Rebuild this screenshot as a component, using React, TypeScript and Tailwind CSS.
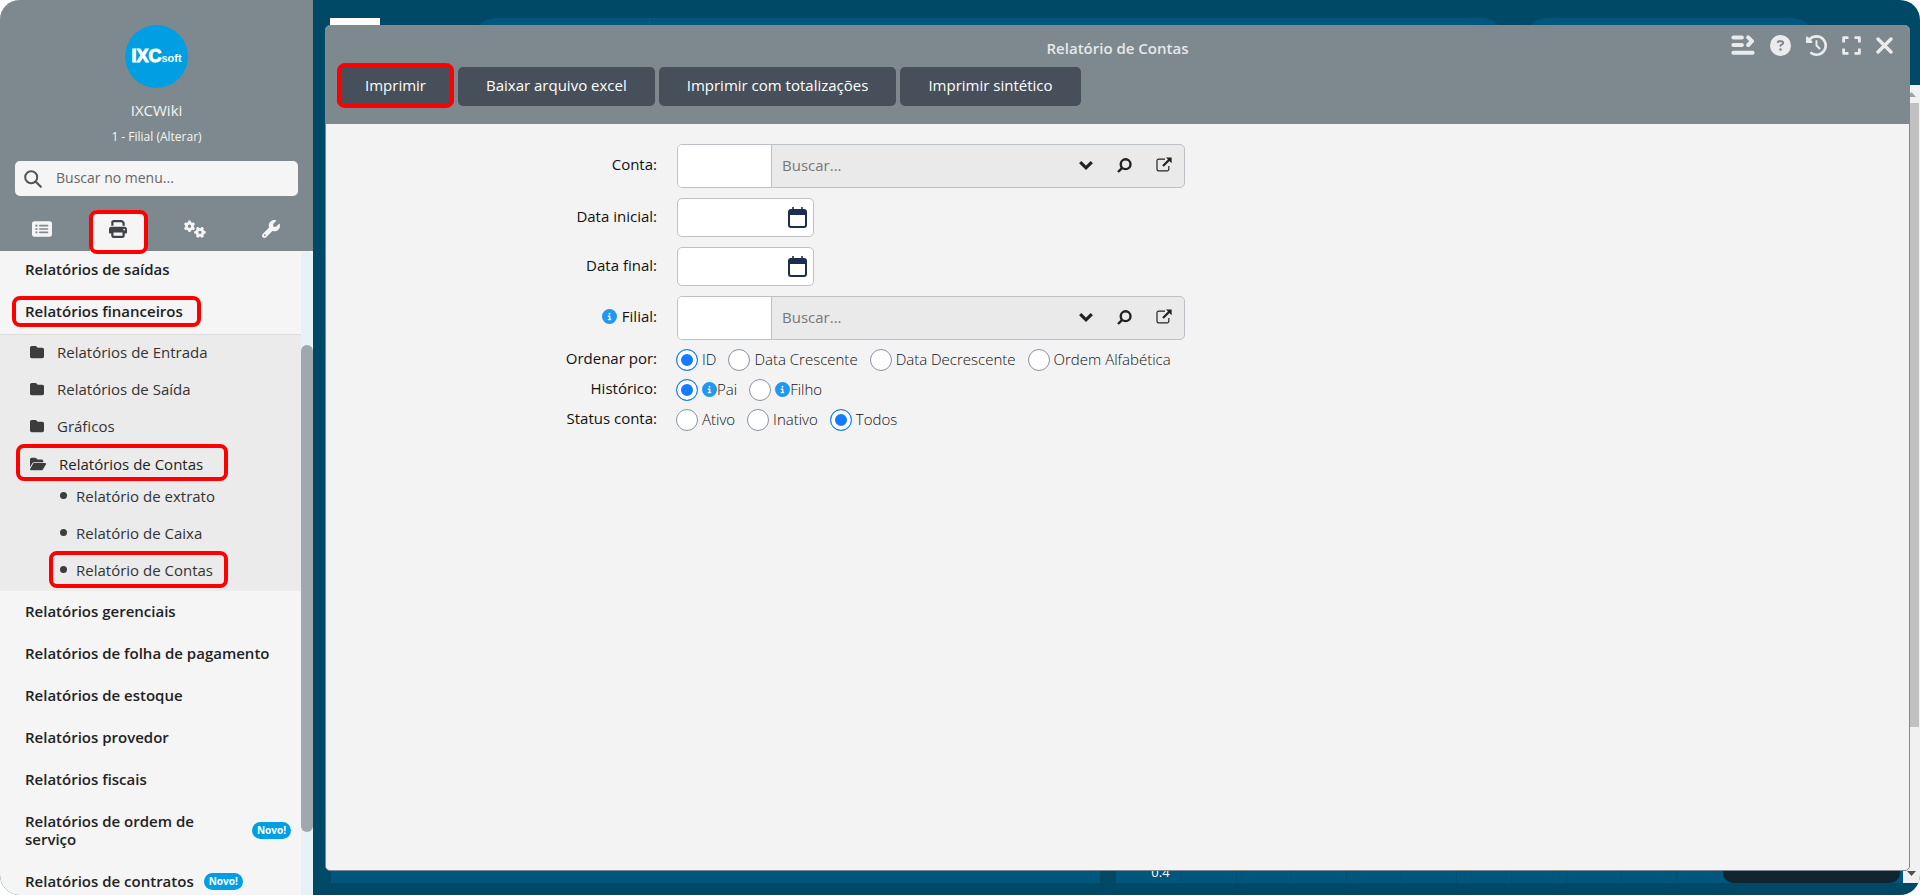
import { useState, type ReactNode } from "react";
import {
  FaCircleInfo,
  FaCircleQuestion,
  FaClockRotateLeft,
  FaFolder,
  FaFolderOpen,
  FaGears,
  FaPrint,
  FaRectangleList,
  FaWrench,
} from "react-icons/fa6";

const TABS = [
  { id: "cadastros", icon: FaRectangleList, size: "size-5" },
  { id: "relatorios", icon: FaPrint, size: "size-[18px]" },
  { id: "sistema", icon: FaGears, size: "size-[22px]" },
  { id: "ferramentas", icon: FaWrench, size: "size-[18px]" },
];

const MENU_AFTER = [
  "Relatórios gerenciais",
  "Relatórios de folha de pagamento",
  "Relatórios de estoque",
  "Relatórios provedor",
  "Relatórios fiscais",
];

const ACTIONS = [
  "Imprimir",
  "Baixar arquivo excel",
  "Imprimir com totalizações",
  "Imprimir sintético",
];

const GRID_LINES = [0, 1, 2, 3, 4, 5, 6, 7, 8, 9];

const Highlight = ({ className }: { className: string }) => (
  <span
    className={`pointer-events-none absolute rounded-lg border-4 border-[#fe0000] ${className}`}
  />
);

const NewBadge = () => (
  <span className="rounded-full bg-[#009fe3] px-[5px] text-[10px] leading-[17px] font-bold text-white">
    Novo!
  </span>
);

const SearchIcon = ({ className }: { className: string }) => (
  <svg
    viewBox="0 0 18 18"
    className={className}
    fill="none"
    stroke="currentColor"
    strokeLinecap="round"
  >
    <circle cx="7.2" cy="7.2" r="6" strokeWidth="2" />
    <path d="M11.8 11.8 16.8 16.8" strokeWidth="2.2" />
  </svg>
);

const Sidebar = () => {
  const [tab, setTab] = useState("relatorios");

  return (
    <aside className="flex w-[313px] shrink-0 flex-col bg-[#f5f5f5]">
      <div className="flex flex-col bg-[#7d898e] pt-[25px]">
        <div className="mx-auto flex size-[63px] items-baseline justify-center rounded-full bg-[#009fe3] pt-[19px] font-['Liberation_Sans',sans-serif] font-bold text-white">
          <span className="text-lg leading-6 [-webkit-text-stroke:1px_white]">
            IXC
          </span>
          <span className="text-[11px] leading-6">soft</span>
        </div>
        <p className="mt-3 text-center text-[15px] leading-5 text-[#f5f5f5]">
          IXCWiki
        </p>
        <a
          href="#filial"
          className="mt-[7px] text-center text-xs leading-5 text-[#f5f5f5]"
        >
          1 - Filial (Alterar)
        </a>
        <label className="mx-[15px] mt-3.5 flex h-[35px] items-center rounded-[5px] bg-[#f5f5f5] pl-[9px]">
          <SearchIcon className="size-[18px] text-[#555]" />
          <input
            type="text"
            aria-label="Buscar no menu"
            placeholder="Buscar no menu..."
            className="ml-3.5 min-w-0 flex-1 bg-transparent pb-0.5 text-sm outline-none placeholder:text-[#666]"
          />
        </label>
        <nav className="mt-3.5 flex px-1">
          {TABS.map(({ id, icon: Icon, size }) => (
            <button
              key={id}
              aria-label={id}
              onClick={() => setTab(id)}
              className="relative flex h-[41px] flex-1 justify-center"
            >
              <span
                className={
                  tab === id
                    ? "flex h-full w-14 items-center justify-center rounded-t-lg bg-[#f5f5f5] pb-1 text-[#3f4247]"
                    : "flex h-full items-center pb-1 text-[#f5f5f5]"
                }
              >
                <Icon className={size} />
              </span>
              {id === "relatorios" && (
                <Highlight className="inset-x-[9px] top-0 -bottom-[3px]" />
              )}
            </button>
          ))}
        </nav>
      </div>

      <div className="flex min-h-0 flex-1">
        <ul className="flex-1 overflow-hidden text-[15px] leading-[18px] font-semibold text-[#222]">
          <li className="flex h-9 items-center pl-[25px]">
            <a href="#saidas">Relatórios de saídas</a>
          </li>
          <li>
            <div className="relative flex h-[47px] items-center pl-[25px]">
              <a href="#financeiros">Relatórios financeiros</a>
              <Highlight className="top-[9px] left-3 h-[31px] w-[189px]" />
            </div>
            <ul className="border-t border-[#dcdcdc] bg-[#ebebeb] pb-[7px] font-normal text-[#333]">
              {["Relatórios de Entrada", "Relatórios de Saída", "Gráficos"].map(
                (name) => (
                  <li
                    key={name}
                    className="flex h-[37px] items-center pb-1 pl-[30px]"
                  >
                    <FaFolder className="size-3.5 text-[#3c3c3c]" />
                    <a href="#pasta" className="ml-[13px]">
                      {name}
                    </a>
                  </li>
                ),
              )}
              <li>
                <div className="relative flex h-[37px] items-center pb-0.5 pl-[30px] font-medium text-[#222]">
                  <FaFolderOpen className="size-4 text-[#3c3c3c]" />
                  <a href="#contas" className="ml-[13px]">
                    Relatórios de Contas
                  </a>
                  <Highlight className="-top-0.5 left-4 h-[37px] w-[212px]" />
                </div>
                <ul className="flex flex-col gap-2.5">
                  {[
                    "Relatório de extrato",
                    "Relatório de Caixa",
                    "Relatório de Contas",
                  ].map((name) => (
                    <li
                      key={name}
                      className="relative flex h-[27px] items-center pb-0.5 pl-[60px]"
                    >
                      <span className="size-[7px] rounded-full bg-[#3c3c3c]" />
                      <a href="#relatorio" className="ml-[9px]">
                        {name}
                      </a>
                      {name === "Relatório de Contas" && (
                        <Highlight className="-top-1.5 left-[49px] h-[37px] w-[179px]" />
                      )}
                    </li>
                  ))}
                </ul>
              </li>
            </ul>
          </li>
          {MENU_AFTER.map((name) => (
            <li key={name} className="flex h-[42px] items-center pb-0.5 pl-[25px]">
              <a href="#grupo">{name}</a>
            </li>
          ))}
          <li className="flex h-[60px] items-center justify-between pr-2.5 pb-0.5 pl-[25px]">
            <a href="#ordem" className="w-[200px]">
              Relatórios de ordem de serviço
            </a>
            <NewBadge />
          </li>
          <li className="flex h-[42px] items-center gap-2.5 pb-0.5 pl-[25px]">
            <a href="#contratos">Relatórios de contratos</a>
            <NewBadge />
          </li>
        </ul>
        <div className="w-3 rounded-t-full bg-[#e8f1f6] pt-[94px]">
          <div className="h-[487px] rounded-full bg-[#a0a7ad]" />
        </div>
      </div>
    </aside>
  );
};

// Dashboard that stays behind the open window
const Backdrop = () => (
  <div className="absolute inset-0 flex flex-col justify-between">
    <div className="flex h-[85px] pt-[18px] pl-[17px]">
      <div className="h-10 w-[50px] bg-white" />
      <div className="ml-[92px] flex h-12 flex-1 rounded-[25px] bg-[#00577e]">
        <div className="w-[178px] border-r border-[#006289]" />
      </div>
      <div className="mr-[104px] ml-[18px] h-12 w-[293px] rounded-[25px] bg-[#00577e]" />
    </div>
    <div className="flex min-h-0 flex-1 justify-end">
      <div className="flex w-[17px] flex-col items-center bg-[#f1f1f1]">
        <svg viewBox="0 0 17 18" className="h-[18px] w-full" fill="#a3a3a3">
          <path d="M8.5 7 13 12H4z" />
        </svg>
        <div className="mr-px h-[624px] w-4 self-end bg-[#c1c1c1]" />
        <svg viewBox="0 0 17 18" className="mt-auto h-[18px] w-full" fill="#505050">
          <path d="M8.5 11 13 6H4z" />
        </svg>
      </div>
    </div>
    <div className="h-3" />
    <div className="absolute right-[17px] bottom-3 left-[18px] flex h-10 gap-4">
      <div className="w-[769px] bg-[#00577e]" />
      <div className="relative flex flex-1 overflow-hidden bg-[#00577e]">
        <div className="flex w-[66px] items-end justify-center border-r border-[#004f73] pb-[3px] pl-6 text-[13px] leading-4 text-white">
          0.4
        </div>
        {GRID_LINES.map((n) => (
          <div key={n} className="w-[55px] border-r border-[#004f73]" />
        ))}
        <div className="absolute right-[3px] bottom-0 h-10 w-[177px] rounded-[10px] bg-[#10252f]" />
      </div>
    </div>
  </div>
);

const WindowControls = () => (
  <div className="absolute top-[7px] right-4 flex h-6 items-center gap-[15px] text-[#ebebeb]">
    <button aria-label="Menu">
      <svg viewBox="0 0 24 20" className="h-5 w-6" fill="none" stroke="currentColor" strokeWidth="4" strokeLinecap="round" strokeLinejoin="round">
        <path d="M2.4 2.4h8.5M2.4 10h8.5M2.4 17.8h19.2" />
        <path d="M17.2 2.4 21 6.2 17.2 10" />
      </svg>
    </button>
    <button aria-label="Ajuda">
      <FaCircleQuestion className="size-[21px]" />
    </button>
    <button aria-label="Histórico">
      <FaClockRotateLeft className="size-[21px]" />
    </button>
    <button aria-label="Tela cheia">
      <svg viewBox="0 0 19 19" className="size-[19px]" fill="none" stroke="currentColor" strokeWidth="2.8" strokeLinejoin="round">
        <path d="M6.5 1.6H1.6V6.5M12.5 1.6h4.9V6.5M17.4 12.5v4.9h-4.9M6.5 17.4H1.6V12.5" />
      </svg>
    </button>
    <button aria-label="Fechar">
      <svg viewBox="0 0 17 17" className="size-[17px]" fill="none" stroke="currentColor" strokeWidth="3.4" strokeLinecap="round">
        <path d="M2 2 15 15M15 2 2 15" />
      </svg>
    </button>
  </div>
);

const Row = ({
  label,
  htmlFor,
  info,
  children,
}: {
  label: string;
  htmlFor?: string;
  info?: boolean;
  children: ReactNode;
}) => (
  <div className="flex items-center gap-5">
    <label
      htmlFor={htmlFor}
      className="flex w-[331px] items-center justify-end gap-[5px] pb-1 text-[15px] leading-5 text-[#111]"
    >
      {info && <FaCircleInfo className="size-[15px] text-[#2196f3]" />}
      {label}
    </label>
    {children}
  </div>
);

const LookupField = ({ id }: { id: string }) => (
  <div className="flex h-11 w-[508px] overflow-hidden rounded-[5px] border border-[#bcc1c6] bg-[#eaeaea]">
    <input
      id={id}
      type="text"
      className="w-[94px] border-r border-[#bcc1c6] bg-white px-2.5 text-[15px] outline-none"
    />
    <input
      type="text"
      aria-label="Buscar"
      placeholder="Buscar..."
      className="min-w-0 flex-1 px-2.5 pb-0.5 text-[15px] outline-none placeholder:text-[#777]"
    />
    <div className="flex items-center gap-6 pr-3 pb-0.5 text-[#222]">
      <button type="button" aria-label="Abrir lista">
        <svg viewBox="0 0 14 14" className="size-3.5" fill="none" stroke="currentColor" strokeWidth="3.2">
          <path d="M1.2 4.2 7 9.8 12.8 4.2" />
        </svg>
      </button>
      <button type="button" aria-label="Pesquisar">
        <svg viewBox="0 0 15 15" className="size-[15px]" fill="none" stroke="currentColor" strokeWidth="2.4">
          <circle cx="8.6" cy="6.2" r="4.9" />
          <path d="M5.2 9.8 1 14" />
        </svg>
      </button>
      <button type="button" aria-label="Abrir cadastro">
        <svg viewBox="0 0 16 16" className="size-4" fill="none" stroke="currentColor">
          <path d="M9 2.2H2.6A1.6 1.6 0 0 0 1 3.8v8.4a1.6 1.6 0 0 0 1.6 1.6h8.6a1.6 1.6 0 0 0 1.6-1.6V9" strokeWidth="1.2" />
          <path d="M7 9 13.2 2.8" strokeWidth="2.2" />
          <path d="M10 .6h5.6v5.6z" fill="currentColor" stroke="none" />
        </svg>
      </button>
    </div>
  </div>
);

const DateField = ({ id }: { id: string }) => (
  <div className="flex h-[39px] w-[137px] items-center rounded-[5px] border border-[#bcc1c6] bg-white pr-1.5 pb-0.5">
    <input
      id={id}
      type="text"
      className="h-full min-w-0 flex-1 px-2.5 text-[15px] outline-none"
    />
    <button type="button" aria-label="Abrir calendário">
      <svg viewBox="0 0 19 22" className="h-[22px] w-[19px] text-[#1d2d50]">
        <path
          fill="currentColor"
          fillRule="evenodd"
          d="M4.2 1h1.6v2h7.4V1h1.6v2H16a3 3 0 0 1 3 3v13a3 3 0 0 1-3 3H3a3 3 0 0 1-3-3V6a3 3 0 0 1 3-3h1.2zM2 9v10a1 1 0 0 0 1 1h13a1 1 0 0 0 1-1V9z"
        />
      </svg>
    </button>
  </div>
);

const RadioGroup = ({
  name,
  options,
  initial,
  info,
}: {
  name: string;
  options: string[];
  initial: string;
  info?: boolean;
}) => (
  <div className="-ml-px flex gap-3">
    {options.map((option) => (
      <label
        key={option}
        className="flex items-center text-[15px] leading-5 font-light text-[#111]"
      >
        <input
          type="radio"
          name={name}
          defaultChecked={option === initial}
          className="mr-1 size-[22px] appearance-none rounded-full border border-[#8a92a3] bg-white checked:border-[#147aff] checked:bg-[#147aff] checked:shadow-[inset_0_0_0_4px_white]"
        />
        <span className="flex items-center pb-0.5">
          {info && <FaCircleInfo className="size-[15px] text-[#2196f3]" />}
          {option}
        </span>
      </label>
    ))}
  </div>
);

const ReportWindow = () => (
  <section className="relative mt-[25px] mr-2.5 mb-6 ml-3 flex flex-1 flex-col overflow-hidden rounded-[5px] border border-[#7d898e] bg-[#f3f3f3]">
    <header className="relative bg-[#7d898e] px-[11px] pt-3 pb-[18px]">
      <h1 className="text-center text-[15px] leading-5 font-semibold text-[#e6e8e9]">
        Relatório de Contas
      </h1>
      <WindowControls />
      <div className="mt-[9px] flex gap-1">
        {ACTIONS.map((action) => (
          <button
            key={action}
            className="relative h-[39px] rounded-[5px] bg-[#464f5a] px-7 pb-0.5 text-[15px] font-medium text-white"
          >
            {action}
            {action === "Imprimir" && (
              <Highlight className="inset-x-0 -top-1 -bottom-0.5" />
            )}
          </button>
        ))}
      </div>
    </header>
    <form className="flex flex-col gap-2.5 pt-5">
      <Row label="Conta:" htmlFor="conta">
        <LookupField id="conta" />
      </Row>
      <Row label="Data inicial:" htmlFor="data-inicial">
        <DateField id="data-inicial" />
      </Row>
      <Row label="Data final:" htmlFor="data-final">
        <DateField id="data-final" />
      </Row>
      <Row label="Filial:" htmlFor="filial" info>
        <LookupField id="filial" />
      </Row>
      <div className="-mt-0.5 flex flex-col gap-1.5">
        <Row label="Ordenar por:">
          <RadioGroup
            name="ordenar"
            initial="ID"
            options={["ID", "Data Crescente", "Data Decrescente", "Ordem Alfabética"]}
          />
        </Row>
        <Row label="Histórico:">
          <RadioGroup name="historico" initial="Pai" options={["Pai", "Filho"]} info />
        </Row>
        <Row label="Status conta:">
          <RadioGroup name="status" initial="Todos" options={["Ativo", "Inativo", "Todos"]} />
        </Row>
      </div>
    </form>
  </section>
);

export default function App() {
  return (
    <div className="flex h-screen overflow-hidden rounded-[20px] bg-[#004966] font-['Open_Sans',sans-serif]">
      <Sidebar />
      <main className="relative flex min-w-0 flex-1">
        <Backdrop />
        <ReportWindow />
      </main>
    </div>
  );
}
